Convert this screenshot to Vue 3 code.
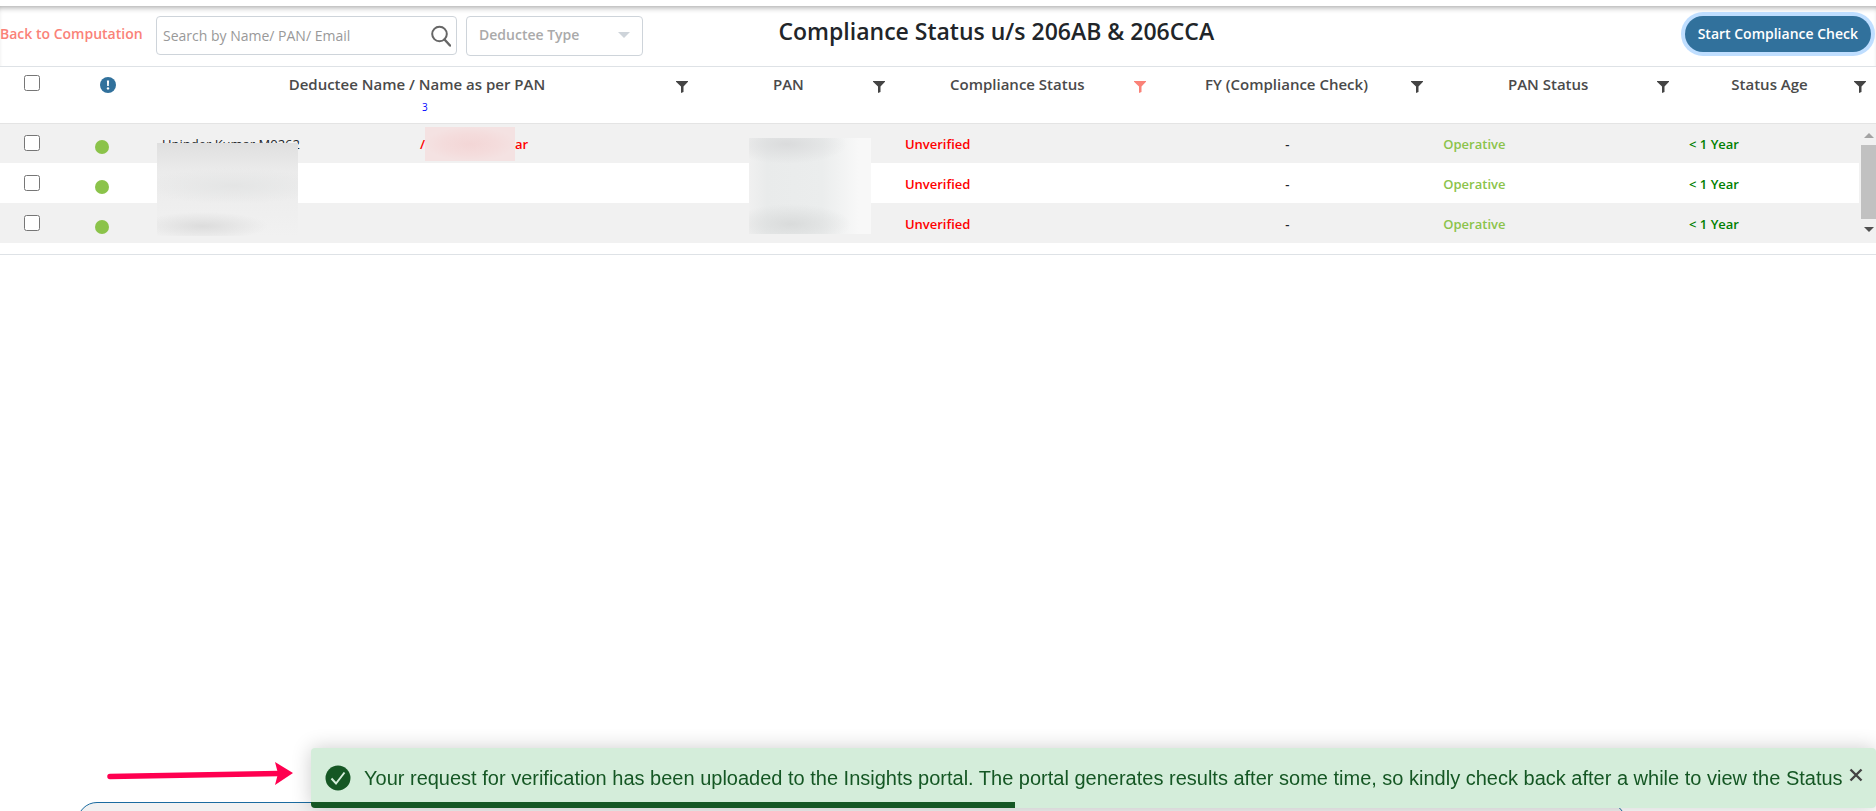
<script setup>
import { computed, ref } from 'vue'

const search = ref('')
const deducteeType = ref('')
const toastOpen = ref(true)
const selected = ref([])

const columns = [
  { key: 'name', label: 'Deductee Name / Name as per PAN', count: 3 },
  { key: 'pan', label: 'PAN' },
  { key: 'status', label: 'Compliance Status', active: true },
  { key: 'fy', label: 'FY (Compliance Check)' },
  { key: 'panStatus', label: 'PAN Status' },
  { key: 'age', label: 'Status Age' }
]

const rows = [
  { id: 1, name: 'Upinder Kumar M0262', masked: true, status: 'Unverified', fy: '-', panStatus: 'Operative', age: '< 1 Year' },
  { id: 2, name: '', status: 'Unverified', fy: '-', panStatus: 'Operative', age: '< 1 Year' },
  { id: 3, name: '', status: 'Unverified', fy: '-', panStatus: 'Operative', age: '< 1 Year' }
]

const allSelected = computed({
  get: () => selected.value.length === rows.length,
  set: (value) => {
    selected.value = value ? rows.map((row) => row.id) : []
  }
})
</script>

<template>
  <main class="page">
    <header class="toolbar">
      <div class="tools">
        <a class="back" href="#">Back to Computation</a>
        <div class="search">
          <input v-model="search" type="text" placeholder="Search by Name/ PAN/ Email" aria-label="Search" />
          <button type="button" aria-label="Search">
            <svg width="20" height="22" viewBox="0 0 20 22" fill="none" stroke="#666" stroke-width="2">
              <circle cx="8.5" cy="9" r="7.3" />
              <path d="M13.5 14.5l5.5 6" stroke-width="2.4" stroke-linecap="round" />
            </svg>
          </button>
        </div>
        <div class="type">
          <select v-model="deducteeType" aria-label="Deductee Type">
            <option value="">Deductee Type</option>
          </select>
          <span class="caret"></span>
        </div>
      </div>
      <h1>Compliance Status u/s 206AB &amp; 206CCA</h1>
      <div class="actions">
        <button type="button" class="start">Start Compliance Check</button>
      </div>
    </header>

    <section class="grid">
      <table>
        <colgroup>
          <col class="col-check" />
          <col class="col-info" />
          <col v-for="col in columns" :key="col.key" :class="'col-' + col.key" />
        </colgroup>
        <thead>
          <tr>
            <th class="center">
              <input v-model="allSelected" type="checkbox" aria-label="Select all" />
            </th>
            <th class="center">
              <svg class="info" width="16" height="16" viewBox="0 0 16 16">
                <circle cx="8" cy="8" r="8" fill="#31719c" />
                <path d="M6.9 3.5h2.2l-.3 5.6H7.2z" fill="#fff" />
                <circle cx="8" cy="11.4" r="1.2" fill="#fff" />
              </svg>
            </th>
            <th v-for="col in columns" :key="col.key">
              <div class="head">
                <span class="label">{{ col.label }}</span>
                <button type="button" class="filter" :class="{ active: col.active }" :aria-label="'Filter ' + col.label">
                  <svg width="12" height="12" viewBox="0 0 12 12">
                    <path d="M0 0h12v.8L7.500 5.500V11l-2.500 1V5.500L0 .8z" fill="currentColor" />
                  </svg>
                </button>
              </div>
              <span v-if="col.count" class="count">{{ col.count }}</span>
            </th>
          </tr>
        </thead>
        <tbody>
          <tr v-for="row in rows" :key="row.id">
            <td class="center">
              <input v-model="selected" type="checkbox" :value="row.id" aria-label="Select row" />
            </td>
            <td><span class="dot"></span></td>
            <td>
              <div class="names">
                <span class="own">{{ row.name }}</span>
                <span v-if="row.masked" class="per-pan">/<i class="mask-pan-name"></i>ar</span>
              </div>
            </td>
            <td></td>
            <td class="unverified">{{ row.status }}</td>
            <td class="fy">{{ row.fy }}</td>
            <td class="operative">{{ row.panStatus }}</td>
            <td class="age">{{ row.age }}</td>
          </tr>
        </tbody>
      </table>
      <div class="mask mask-name"></div>
      <div class="mask mask-pan"></div>
      <div class="scrollbar">
        <span class="up"></span>
        <span class="thumb"></span>
        <span class="down"></span>
      </div>
    </section>

    <div class="panel"></div>

    <div v-if="toastOpen" class="notice">
      <svg class="arrow" width="186" height="24" viewBox="0 0 186 24">
        <path d="M3 14.5L172 11.5" stroke="#ff0050" stroke-width="5.5" stroke-linecap="round" />
        <path d="M168 0L186 11L168 23L171 11.5z" fill="#ff0050" />
      </svg>
      <div class="toast" role="status">
        <svg class="ok" width="26" height="26" viewBox="0 0 26 26">
          <circle cx="13" cy="13" r="12.5" fill="#155724" />
          <path d="M6.500 13.500l4.500 5L19.500 7.500" fill="none" stroke="#d4edda" stroke-width="2" />
        </svg>
        <p>Your request for verification has been uploaded to the Insights portal. The portal generates results after some time, so kindly check back after a while to view the Status</p>
        <button type="button" class="close" aria-label="Close" @click="toastOpen = false">
          <svg width="14" height="14" viewBox="0 0 14 14">
            <path d="M1.500 1.500l11 11M12.500 1.500l-11 11" stroke="#444" stroke-width="2.400" />
          </svg>
        </button>
        <div class="progress"></div>
      </div>
    </div>
  </main>
</template>

<style>
body { background: #fff; }
</style>

<style scoped>
.page {
  padding-top: 6px;
  font-family: "Open Sans", "Noto Sans", sans-serif;
  font-size: 13px;
  color: #212529;
}
.page * { box-sizing: border-box; }
button { border: none; background: transparent; padding: 0; font-family: inherit; }
svg { display: block; }

.toolbar {
  display: grid;
  grid-template-columns: 37% 32.5% 1fr;
  height: 60px;
  padding: 10px 5px 0 0;
  box-shadow: inset 0 5px 6px -4px rgba(0, 0, 0, 0.4);
}
.tools { display: flex; align-items: flex-start; }
.back {
  flex: none;
  width: 156px;
  line-height: 36px;
  font-size: 14px;
  font-weight: 600;
  color: #fa8278;
  text-decoration: none;
  white-space: nowrap;
}
.search {
  display: flex;
  width: 301px;
  height: 39px;
  border: 1px solid #ced4da;
  border-radius: 4px;
}
.search input {
  flex: 1;
  min-width: 0;
  padding: 0 6px;
  border: none;
  background: transparent;
  font: 14px "Open Sans", sans-serif;
}
.search input::placeholder { color: #999; }
.search button { padding: 0 5px 0 0; }
.type { position: relative; width: 177px; height: 40px; margin-left: 9px; }
.type select {
  appearance: none;
  width: 100%;
  height: 100%;
  padding: 0 12px 3px;
  border: 1px solid #ced4da;
  border-radius: 4px;
  background: #fff;
  font: 600 14px "Open Sans", sans-serif;
  color: #aaa;
}
.caret {
  position: absolute;
  right: 13px;
  top: 16px;
  border: 6px solid transparent;
  border-top-color: #ced4da;
  border-bottom: none;
}
h1 { margin: 0; font-size: 23px; font-weight: 600; line-height: 30px; text-align: center; white-space: nowrap; }
.actions { display: flex; justify-content: flex-end; align-items: flex-start; }
.start {
  height: 36px;
  padding: 0 13px 2px;
  border-radius: 18px;
  background: #31719c;
  box-shadow: 0 0 0 4px #bfdeff;
  font-size: 14px;
  font-weight: 600;
  color: #fff;
}

.grid { position: relative; padding-bottom: 11px; border: solid #dee2e6; border-width: 1px 0; }
table { width: 100%; table-layout: fixed; border-collapse: collapse; }
.col-check { width: 64px; }
.col-info { width: 88px; }
.col-name { width: 29.1%; }
.col-pan { width: 10.5%; }
.col-status { width: 13.9%; }
.col-fy { width: 14.8%; }
.col-panStatus { width: 13.1%; }
th { height: 56px; padding: 7px 10px 0; border-bottom: 1px solid #e4e4e4; vertical-align: top; font-weight: 600; }
td { height: 40px; padding: 2px 10px 0; font-weight: 600; white-space: nowrap; }
th.center { padding: 8px 0 0; text-align: center; }
td.center { padding: 0; text-align: center; }
tbody tr:nth-child(odd) { background: #f1f1f1; }
input[type="checkbox"] { display: block; width: 16px; height: 16px; margin: 0 auto; }
.info { margin: 2px auto 0; }
.head { display: flex; align-items: center; font-size: 15px; line-height: 20px; color: #4a4a4a; }
.label { flex: 1; padding-right: 4px; text-align: center; white-space: nowrap; }
.filter { padding-top: 5px; color: #444; }
.filter.active { color: #fa8278; }
.count { display: block; font-size: 10px; font-weight: 400; line-height: 26px; color: #00f; }
.dot { display: block; width: 14px; height: 14px; margin: 6px 0 0 21px; border-radius: 50%; background: #8bc34a; }
.names { display: flex; align-items: center; }
.own { width: 258px; font-weight: 400; }
.per-pan { display: flex; align-items: center; color: #f00; }
.mask-pan-name {
  width: 90px;
  height: 34px;
  background: radial-gradient(closest-side, #f3d6d6, #f4dcdc 60%, #f4e2e2);
}
.unverified { color: #f00; }
td.fy { padding-right: 24px; text-align: center; }
.operative { color: #8bc34a; }
.age { color: #008000; }

/* blurred cover over personal data */
.mask { position: absolute; }
.mask-name {
  left: 157px;
  top: 76px;
  width: 141px;
  height: 93px;
  background:
    radial-gradient(ellipse 65px 14px at 46px 83px, #dcdcdc, transparent),
    radial-gradient(ellipse 90px 18px at 76px 43px, #e4e5e5, transparent),
    linear-gradient(#dfdfdf, #ebebeb 30%, #f1f1f1);
}
.mask-pan {
  left: 749px;
  top: 71px;
  width: 122px;
  height: 96px;
  background:
    radial-gradient(ellipse 60px 20px at 38px 6px, #dadbdc, transparent),
    radial-gradient(ellipse 60px 20px at 42px 86px, #d9dbdb, transparent),
    linear-gradient(90deg, #f0f0f0, #e9ebeb 15%, #ebeded 60%, #f8f8f8 90%);
}
.scrollbar {
  position: absolute;
  top: 57px;
  right: 0;
  bottom: 11px;
  width: 17px;
  display: flex;
  flex-direction: column;
  align-items: center;
  padding: 9px 0 9px 2px;
  background: #f1f1f1;
}
.thumb { width: 100%; height: 74px; margin: 7px 0 8px; background: #c1c1c1; }
.up { border: 5px solid transparent; border-bottom-color: #a3a3a3; border-top: none; }
.down { border: 5px solid transparent; border-top-color: #505050; border-bottom: none; }

.panel {
  position: fixed;
  left: 77px;
  right: 250px;
  bottom: -39px;
  height: 48px;
  border: 1px solid #1a6ba0;
  border-radius: 20px;
  background: #f1f1f1;
}
.notice { position: fixed; left: 107px; right: 0; bottom: 3px; display: flex; align-items: center; }
.arrow { flex: none; margin: 0 18px 8px 0; }
.toast {
  position: relative;
  flex: 1;
  display: flex;
  align-items: center;
  height: 60px;
  padding: 0 13px 0 14px;
  border-radius: 4px;
  overflow: hidden;
  background: #d4edda;
  box-shadow: 0 0 20px rgba(0, 0, 0, 0.2);
  font-family: "Liberation Sans", Arial, sans-serif;
  font-size: 20px;
  color: #155724;
}
.toast p { flex: 1; margin: 0 0 0 13px; white-space: nowrap; }
.close { padding-bottom: 6px; }
.progress { position: absolute; left: 0; bottom: 0; width: 45%; height: 6px; background: #155724; }
</style>
